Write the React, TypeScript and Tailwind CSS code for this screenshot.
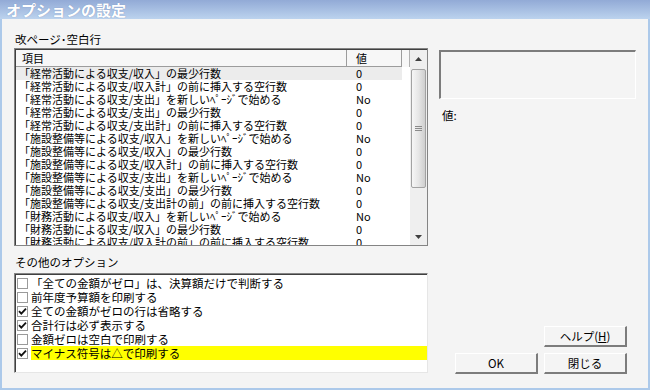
import React from "react";

const rows: [string, string][] = [
  ["「経常活動による収支/収入」の最少行数", "0"],
  ["「経常活動による収支/収入計」の前に挿入する空行数", "0"],
  ["「経常活動による収支/支出」を新しいﾍﾟｰｼﾞで始める", "No"],
  ["「経常活動による収支/支出」の最少行数", "0"],
  ["「経常活動による収支/支出計」の前に挿入する空行数", "0"],
  ["「施設整備等による収支/収入」を新しいﾍﾟｰｼﾞで始める", "No"],
  ["「施設整備等による収支/収入」の最少行数", "0"],
  ["「施設整備等による収支/収入計」の前に挿入する空行数", "0"],
  ["「施設整備等による収支/支出」を新しいﾍﾟｰｼﾞで始める", "No"],
  ["「施設整備等による収支/支出」の最少行数", "0"],
  ["「施設整備等による収支/支出計の前」の前に挿入する空行数", "0"],
  ["「財務活動による収支/収入」を新しいﾍﾟｰｼﾞで始める", "No"],
  ["「財務活動による収支/収入」の最少行数", "0"],
  ["「財務活動による収支/収入計の前」の前に挿入する空行数", "0"],
];

const options: [string, boolean, boolean][] = [
  ["「全ての金額がゼロ」は、決算額だけで判断する", false, false],
  ["前年度予算額を印刷する", false, false],
  ["全ての金額がゼロの行は省略する", true, false],
  ["合計行は必ず表示する", true, false],
  ["金額ゼロは空白で印刷する", false, false],
  ["マイナス符号は△で印刷する", true, true],
];

function CheckBox({ checked }: { checked: boolean }) {
  return (
    <div className="w-[11px] h-[11px] shrink-0 border border-[#9a9a9a] bg-white flex items-center justify-center">
      {checked && (
        <svg width="9" height="9" viewBox="0 0 9 9">
          <path d="M1 4.2 L3.3 6.6 L8 1.6" fill="none" stroke="#111" strokeWidth="1.8" />
        </svg>
      )}
    </div>
  );
}

function Btn({ children }: { children: React.ReactNode }) {
  return (
    <div className="w-[83px] h-[21px] flex items-center justify-center border-t border-l border-r-2 border-b-2 border-t-white border-l-white border-r-[#7c7c7c] border-b-[#7c7c7c] text-[11.5px] leading-[14px] text-black">
      {children}
    </div>
  );
}

export default function App() {
  return (
    <div className="w-[650px] h-[390px] flex flex-col bg-[#f4f4f4] font-['Noto_Sans_CJK_JP',sans-serif] text-black overflow-hidden">
      {/* title bar */}
      <div className="h-[19px] shrink-0 bg-gradient-to-b from-[#92aad6] to-[#bcd3ee] flex items-center pl-[6px]">
        <span className="text-white font-bold text-[15px] leading-[19px] [text-shadow:0_0_1px_#6f88b4]">
          オプションの設定
        </span>
      </div>

      {/* body */}
      <div className="flex-1 flex border-l-2 border-r-2 border-b-2 border-[#acc9ea] pt-[13px] pl-[12px]">
        {/* left column */}
        <div className="w-[414px] flex flex-col">
          <div className="text-[11.5px] leading-[14px] h-[14px] pl-[1px]">改ページ･空白行</div>
          <div className="mt-[2px] w-[414px] h-[198px] border border-[#848484] flex">
            <div className="flex-1 flex border-t border-l border-[#404040] bg-white overflow-hidden">
              <div className="flex-1 flex flex-col overflow-hidden">
                <div className="h-[17px] shrink-0 flex bg-[#f7f7f7] text-[11px] leading-[16px]">
                  <div className="w-[331px] pl-[6px] border-r border-b border-[#9c9c9c]">項目</div>
                  <div className="w-[55px] pl-[9px] border-r border-b border-[#9c9c9c]">値</div>
                  <div className="flex-1 border-r border-[#b0b0b0]"></div>
                </div>
                <div className="flex flex-col">
                  {rows.map(([label, val], i) => (
                    <div
                      key={i}
                      className={`h-[13px] shrink-0 flex items-center text-[11px] leading-[13px] w-[386px] ${
                        i === 0 ? "bg-[#ececec]" : ""
                      }`}
                    >
                      <div className="w-[331px] pl-[3px] whitespace-nowrap">{label}</div>
                      <div className="w-[55px] pl-[9px] whitespace-nowrap">{val}</div>
                    </div>
                  ))}
                </div>
              </div>
              {/* scrollbar */}
              <div className="w-[17px] shrink-0 bg-[#efefef] flex flex-col items-center">
                <div className="h-[17px] w-full flex items-center justify-center">
                  <svg width="7" height="4" viewBox="0 0 7 4">
                    <path d="M0 4 L3.5 0 L7 4 Z" fill="#404040" />
                  </svg>
                </div>
                <div className="mt-[2px] w-[15px] h-[119px] rounded-[2px] border border-[#a2a2a2] bg-gradient-to-r from-[#f6f6f6] via-[#e6e6e6] to-[#cfcfcf] flex items-center justify-center">
                  <svg width="7" height="6" viewBox="0 0 7 6">
                    <path d="M0 0.5 H7 M0 2.5 H7 M0 4.5 H7" stroke="#8a8a8a" strokeWidth="1" />
                  </svg>
                </div>
                <div className="flex-1"></div>
                <div className="h-[17px] w-full flex items-center justify-center">
                  <svg width="7" height="4" viewBox="0 0 7 4">
                    <path d="M0 0 L3.5 4 L7 0 Z" fill="#404040" />
                  </svg>
                </div>
              </div>
            </div>
          </div>

          <div className="mt-[9px] text-[11.5px] leading-[14px] h-[14px] pl-[1px]">その他のオプション</div>
          <div className="mt-[4px] w-[414px] h-[100px] border-t border-l border-r border-b border-t-[#848484] border-l-[#848484] border-r-[#e6e6e6] border-b-[#e6e6e6]">
            <div className="h-full border-t border-l border-[#404040] bg-white pt-[1px] flex flex-col">
              {options.map(([label, checked, hl], i) => (
                <div key={i} className="h-[14px] shrink-0 flex items-center pl-[1px]">
                  <CheckBox checked={checked} />
                  <div
                    className={`ml-[3px] flex-1 h-[14px] text-[11.5px] leading-[14px] whitespace-nowrap ${
                      hl ? "bg-[#ffff00]" : ""
                    }`}
                  >
                    {label}
                  </div>
                </div>
              ))}
            </div>
          </div>
        </div>

        {/* right column */}
        <div className="ml-[11px] w-[197px] h-[342px] pt-[18px] flex flex-col">
          <div className="h-[49px] border-t-2 border-l-2 border-r border-b border-t-[#7c7c7c] border-l-[#7c7c7c] border-r-white border-b-white"></div>
          <div className="mt-[9px] pl-[3px] text-[11.5px] leading-[14px]">値:</div>
          <div className="mt-auto flex flex-col items-end pr-[9px] gap-[6px]">
            <Btn>
              <span>
                ヘルプ(<span className="underline">H</span>)
              </span>
            </Btn>
            <div className="flex gap-[6px]">
              <Btn>OK</Btn>
              <Btn>閉じる</Btn>
            </div>
          </div>
        </div>
      </div>
    </div>
  );
}
